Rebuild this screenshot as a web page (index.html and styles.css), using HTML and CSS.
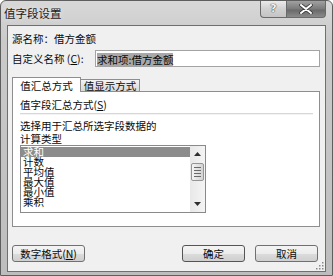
FILE: index.html
```html
<!DOCTYPE html>
<html>
  <head>
    <title>值字段设置</title>
    <link rel="stylesheet" href="styles.css">
  </head>
  <body>
    <div class="window">
      <div class="titlebar">
        <span class="title">值字段设置</span>
        <div class="caption">
          <span class="cap help">?</span>
          <span class="cap close">
            <svg width="14" height="10" viewBox="0 0 14 10">
              <path d="M2 1 L12 9 M12 1 L2 9" stroke="#3a3a3a" stroke-width="3.6" stroke-linecap="round"/>
              <path d="M2 1 L12 9 M12 1 L2 9" stroke="#ffffff" stroke-width="2" stroke-linecap="round"/>
            </svg>
          </span>
        </div>
      </div>

      <div class="client">
        <div class="source">源名称：借方金额</div>

        <div class="custom">
          <label class="custom-label">自定义名称 (<u>C</u>):</label>
          <div class="textbox"><span class="selected-text">求和项:借方金额</span></div>
        </div>

        <div class="tabs">
          <span class="tab active">值汇总方式</span>
          <span class="tab">值显示方式</span>
        </div>

        <div class="panel">
          <div class="group-label">值字段汇总方式(<u>S</u>)</div>
          <div class="group-line"></div>
          <div class="desc">选择用于汇总所选字段数据的<br>计算类型</div>
          <div class="listbox">
            <ul class="items">
              <li class="item selected">求和</li>
              <li class="item">计数</li>
              <li class="item">平均值</li>
              <li class="item">最大值</li>
              <li class="item">最小值</li>
              <li class="item">乘积</li>
            </ul>
            <div class="scrollbar">
              <div class="arrow">
                <svg width="7" height="4" viewBox="0 0 7 4"><path d="M0 4 L3.5 0 L7 4 Z" fill="#2e2e2e"/></svg>
              </div>
              <div class="thumb">
                <span class="grip-line"></span>
                <span class="grip-line"></span>
                <span class="grip-line"></span>
                <span class="grip-line"></span>
              </div>
              <div class="track"></div>
              <div class="arrow">
                <svg width="7" height="4" viewBox="0 0 7 4"><path d="M0 0 L7 0 L3.5 4 Z" fill="#2e2e2e"/></svg>
              </div>
            </div>
          </div>
        </div>

        <div class="buttons">
          <button class="btn number-format">数字格式(<u>N</u>)</button>
          <span class="spacer"></span>
          <button class="btn ok">确定</button>
          <button class="btn">取消</button>
        </div>

        <svg class="grip" width="10" height="10" viewBox="0 0 10 10">
          <rect x="8" y="2" width="1.5" height="1.5" fill="#8a8a8a"/>
          <rect x="5" y="5" width="1.5" height="1.5" fill="#8a8a8a"/>
          <rect x="8" y="5" width="1.5" height="1.5" fill="#8a8a8a"/>
          <rect x="2" y="8" width="1.5" height="1.5" fill="#8a8a8a"/>
          <rect x="5" y="8" width="1.5" height="1.5" fill="#8a8a8a"/>
          <rect x="8" y="8" width="1.5" height="1.5" fill="#8a8a8a"/>
        </svg>
      </div>
    </div>
  </body>
</html>
```

FILE: styles.css
```css
* {
  box-sizing: border-box;
}

body {
  margin: 0;
  font-family: "Noto Sans CJK SC", "Noto Sans", sans-serif;
  font-size: 10.5px;
  color: #0a0a0a;
}

.window {
  width: 333px;
  height: 276px;
  background: linear-gradient(#d8d8d8, #cacaca 40px, #bdbdbd);
  border: 1px solid #5e5e5e;
  border-radius: 6px 6px 0 0;
  padding: 0 6px 3px 6px;
  display: flex;
  flex-direction: column;
  overflow: hidden;
}

.titlebar {
  height: 24px;
  display: flex;
  justify-content: space-between;
  align-items: flex-start;
}

.title {
  margin: 4px 0 0 -3px;
  line-height: 16px;
  font-size: 11.5px;
  color: #1a1a1a;
  text-shadow: 0 0 4px #eeeeee;
}

.caption {
  display: flex;
  margin-top: -1px;
}

.cap {
  height: 18px;
  display: flex;
  align-items: center;
  justify-content: center;
  border: 1px solid #6a6a6a;
  border-top: none;
}

.help {
  width: 26px;
  border-right: none;
  border-radius: 0 0 0 4px;
  background: linear-gradient(#eeeeee, #d2d2d2 50%, #c4c4c4);
  font-family: "DejaVu Sans", sans-serif;
  font-size: 11px;
  font-weight: bold;
  color: #f4f4f4;
  text-shadow: 0 0 1px #333, 0 0 1px #333;
}

.close {
  width: 40px;
  border-radius: 0 0 4px 0;
  background: linear-gradient(#a6a6a6, #7c7c7c 50%, #6a6a6a 60%, #8a8a8a);
}

.client {
  position: relative;
  width: 319px;
  height: 247px;
  background: #f0f0f0;
  border: 1px solid #6f6f6f;
  padding: 0 5px 0 4px;
  display: flex;
  flex-direction: column;
}

.source {
  margin-top: 6px;
  line-height: 14px;
}

.custom {
  margin-top: 4px;
  height: 17px;
  display: flex;
  align-items: center;
}

.custom-label {
  width: 83px;
  line-height: 14px;
}

.textbox {
  width: 225px;
  height: 17px;
  background: #fff;
  border: 1px solid #a3a3a3;
  padding: 1px 0 0 1px;
}

.selected-text {
  display: inline-block;
  background: #a8a8a8;
  line-height: 13px;
  color: #0a0a0a;
}

.tabs {
  margin-top: 10px;
  height: 14px;
  display: flex;
  align-items: flex-end;
}

.tab {
  height: 12px;
  width: 59px;
  text-align: center;
  line-height: 11px;
  border: 1px solid #8e8e8e;
  border-bottom: none;
  border-left: none;
  background: linear-gradient(#f4f4f4, #e4e4e4 50%, #d8d8d8);
}

.tab.active {
  position: relative;
  z-index: 1;
  height: 15px;
  width: 69px;
  margin-bottom: -1px;
  border-left: 1px solid #8e8e8e;
  line-height: 16px;
  background: #fff;
}

.panel {
  width: 308px;
  height: 136px;
  background: #fff;
  border: 1px solid #8e8e8e;
  padding: 6px 6px 0 7px;
}

.group-label {
  line-height: 14px;
}

.group-line {
  margin-top: 1px;
  height: 2px;
  border-top: 1px solid #d8d8d8;
  border-bottom: 1px solid #f2f2f2;
}

.desc {
  margin-top: 4px;
  line-height: 13px;
}

.listbox {
  width: 186px;
  height: 68px;
  border: 1px solid #8a8a8a;
  display: flex;
}

.items {
  list-style: none;
  margin: 0;
  padding: 1px 0 0 0;
  width: 169px;
}

.item {
  line-height: 10px;
  height: 10px;
  padding-left: 2px;
  color: #0a0a0a;
}

.item.selected {
  background: #8c8c8c;
  color: #fff;
}

.scrollbar {
  width: 15px;
  background: linear-gradient(90deg, #e8e8e8, #f4f4f4);
  display: flex;
  flex-direction: column;
  align-items: center;
}

.arrow {
  height: 16px;
  width: 15px;
  display: flex;
  align-items: center;
  justify-content: center;
}

.thumb {
  margin-top: 1px;
  width: 13px;
  height: 18px;
  border: 1px solid #959595;
  border-radius: 2px;
  background: linear-gradient(90deg, #f4f4f4, #e2e2e2 50%, #d4d4d4);
  display: flex;
  flex-direction: column;
  align-items: center;
  justify-content: center;
  gap: 2px;
}

.grip-line {
  width: 7px;
  height: 1px;
  background: #6a6a6a;
}

.track {
  flex: 1;
}

.buttons {
  margin-top: 18px;
  height: 17px;
  display: flex;
  padding-right: 2px;
}

.btn {
  height: 17px;
  width: 63px;
  padding: 0;
  font-family: "Noto Sans CJK SC", "Noto Sans", sans-serif;
  font-size: 10.5px;
  line-height: 14px;
  color: #0a0a0a;
  border: 1px solid #707070;
  border-radius: 3px;
  background: linear-gradient(#f4f4f4, #ececec 50%, #dcdcdc 51%, #cfcfcf);
}

.number-format {
  width: 73px;
}

.ok {
  margin-right: 10px;
  border-color: #555;
}

.spacer {
  flex: 1;
}

.grip {
  position: absolute;
  right: 1px;
  bottom: 1px;
}
```
